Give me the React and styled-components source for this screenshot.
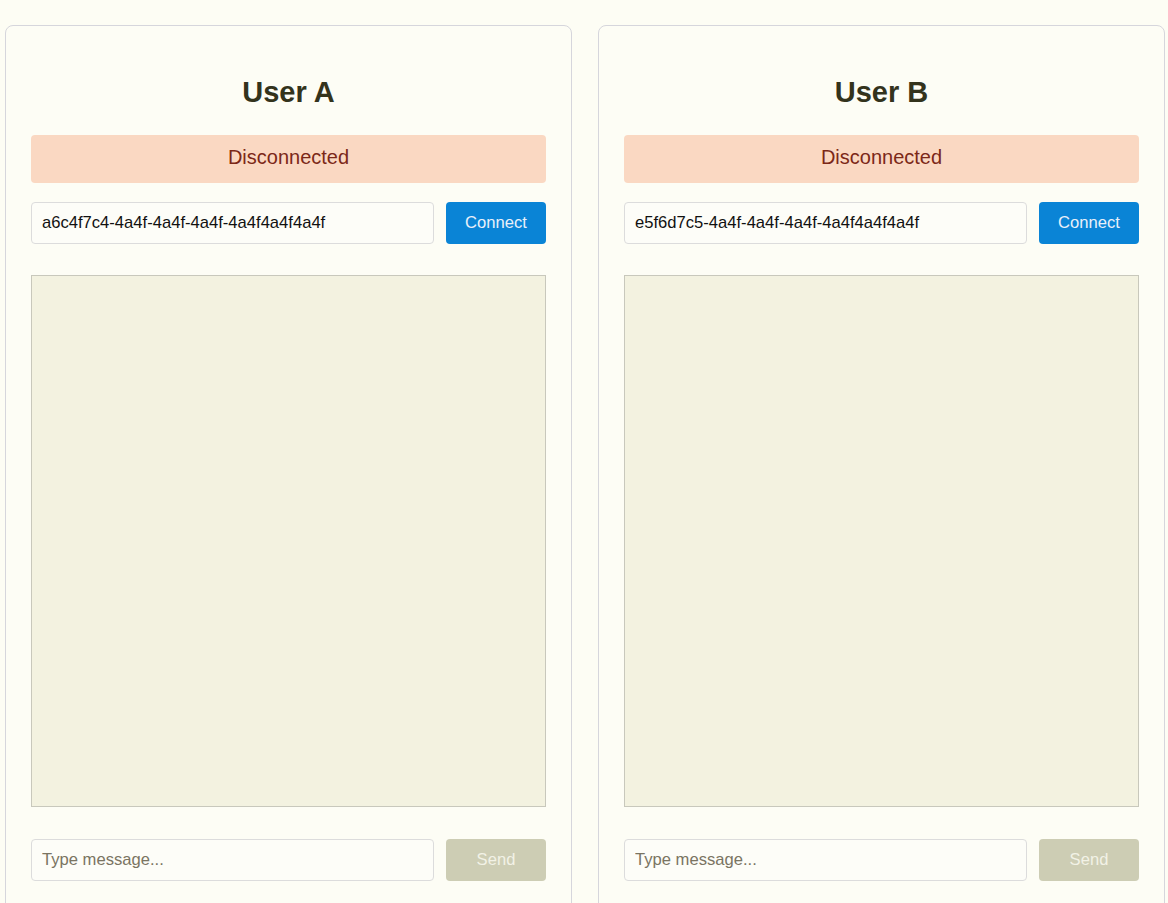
import React from "react";
import styled, { createGlobalStyle } from "styled-components";

const Global = createGlobalStyle`
  html, body {
    margin: 0;
    padding: 0;
    background: #fdfdf4;
    font-family: "Liberation Sans", Arial, sans-serif;
    overflow: hidden;
    height: 903px;
  }
  * { box-sizing: border-box; }
`;

const Page = styled.div`
  display: flex;
  align-items: flex-start;
  gap: 26px;
  padding: 25px 3px 0 5px;
`;

const Card = styled.section`
  flex: 1;
  min-width: 0;
  border: 1px solid #d6d6dc;
  border-radius: 8px;
  padding: 25px 25px 30px;
  background: #fdfdf5;
  display: flex;
  flex-direction: column;
`;

const Title = styled.h2`
  margin: 25px 0 27px;
  text-align: center;
  font-size: 29px;
  font-weight: bold;
  line-height: 32px;
  color: #33331c;
`;

const Status = styled.div`
  height: 48px;
  line-height: 44px;
  padding-bottom: 4px;
  text-align: center;
  font-size: 20px;
  border-radius: 4px;
  background: #fad8c2;
  color: #7c2818;
`;

const Row = styled.div`
  display: flex;
  gap: 12px;
  margin-top: ${(p) => p.$top}px;
`;

const Input = styled.input`
  flex: 1;
  min-width: 0;
  height: 42px;
  padding: 0 10px;
  border: 1px solid #dcdcdc;
  border-radius: 4px;
  background: #fdfdf8;
  font-family: "Liberation Sans", Arial, sans-serif;
  font-size: 16.6px;
  color: #111;
  outline: none;
  &::placeholder {
    color: #7a7462;
  }
`;

const Button = styled.button`
  width: 100px;
  height: 42px;
  border: none;
  border-radius: 4px;
  font-family: "Liberation Sans", Arial, sans-serif;
  font-size: 16.6px;
  background: ${(p) => (p.disabled ? "#cdcdb4" : "#0a84d6")};
  color: ${(p) => (p.disabled ? "#f2f2e6" : "#e8f0fa")};
  cursor: ${(p) => (p.disabled ? "default" : "pointer")};
`;

const Messages = styled.div`
  flex-shrink: 0;
  margin-top: 31px;
  height: 532px;
  border: 1px solid #c8c8bc;
  background: #f3f2e0;
`;

function UserPanel({ name, id }) {
  return (
    <Card>
      <Title>{name}</Title>
      <Status>Disconnected</Status>
      <Row $top={19}>
        <Input defaultValue={id} />
        <Button>Connect</Button>
      </Row>
      <Messages />
      <Row $top={32}>
        <Input placeholder="Type message..." />
        <Button disabled>Send</Button>
      </Row>
    </Card>
  );
}

export default function App() {
  return (
    <>
      <Global />
      <Page>
        <UserPanel name="User A" id="a6c4f7c4-4a4f-4a4f-4a4f-4a4f4a4f4a4f" />
        <UserPanel name="User B" id="e5f6d7c5-4a4f-4a4f-4a4f-4a4f4a4f4a4f" />
      </Page>
    </>
  );
}
